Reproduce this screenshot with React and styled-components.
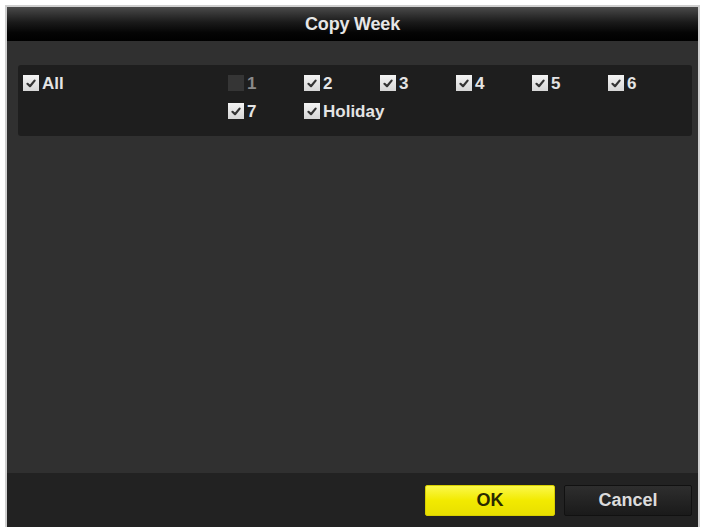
import React from "react";
import styled, { createGlobalStyle } from "styled-components";

const Global = createGlobalStyle`
  html, body { margin: 0; padding: 0; background: #ffffff; }
  body { font-family: "Liberation Sans", Arial, sans-serif; }
`;

const Page = styled.div`
  padding: 7px 0 0 7px;
`;

const Dialog = styled.div`
  width: 691px;
  height: 520px;
  display: flex;
  flex-direction: column;
  background: #303030;
  box-shadow: 0 0 0 2px #cfcfcf;
`;

const TitleBar = styled.div`
  height: 34px;
  flex: none;
  display: flex;
  align-items: center;
  justify-content: center;
  background: linear-gradient(#4a4a4a 0%, #1a1a1a 45%, #050505 75%, #000 100%);
  color: #e6e6e6;
  font-size: 18px;
  font-weight: bold;
  letter-spacing: -0.2px;
`;

const Body = styled.div`
  flex: 1;
  padding: 24px 6px 0 11px;
`;

const Panel = styled.div`
  height: 71px;
  box-sizing: border-box;
  padding: 10px 5px;
  background: #1e1e1e;
  border-radius: 3px;
  display: grid;
  grid-template-columns: 205px repeat(6, 76px);
  grid-auto-rows: 28px;
  align-content: start;
`;

const Item = styled.label`
  display: flex;
  align-items: flex-start;
  gap: 3px;
  grid-column: ${(p) => p.$col};
  grid-row: ${(p) => p.$row};
  color: ${(p) => (p.$on ? "#e4e4e4" : "#8a8a8a")};
  font-size: 17px;
  font-weight: bold;
  line-height: 17px;
`;

const Box = styled.span`
  width: 16px;
  height: 16px;
  flex: none;
  display: flex;
  align-items: center;
  justify-content: center;
  background: ${(p) =>
    p.$on ? "linear-gradient(#f4f4f4, #d6d6d6)" : "#353535"};
`;

const Footer = styled.div`
  height: 54px;
  flex: none;
  background: #222222;
  display: flex;
  align-items: center;
  justify-content: flex-end;
  gap: 9px;
  padding-right: 6px;
`;

const Button = styled.div`
  height: 31px;
  width: ${(p) => p.$w}px;
  display: flex;
  align-items: center;
  justify-content: center;
  font-size: 18px;
  font-weight: bold;
  box-sizing: border-box;
  color: ${(p) => (p.$primary ? "#2a2a00" : "#dcdcdc")};
  background: ${(p) =>
    p.$primary
      ? "linear-gradient(#fbf84a, #f2ea00 50%, #e8df00)"
      : "linear-gradient(#2e2e2e, #1a1a1a)"};
  border: 1px solid ${(p) => (p.$primary ? "#d8cf00" : "#111")};
  border-radius: 2px;
`;

const Check = () => (
  <svg width="10" height="9" viewBox="0 0 10 9">
    <path d="M1.5 4.8 L4 7.2 L8.6 1.6" fill="none" stroke="#333" strokeWidth="2.2" strokeLinecap="round" strokeLinejoin="round" />
  </svg>
);

const items = [
  { label: "All", col: 1, row: 1, on: true },
  { label: "1", col: 2, row: 1, on: false },
  { label: "2", col: 3, row: 1, on: true },
  { label: "3", col: 4, row: 1, on: true },
  { label: "4", col: 5, row: 1, on: true },
  { label: "5", col: 6, row: 1, on: true },
  { label: "6", col: 7, row: 1, on: true },
  { label: "7", col: 2, row: 2, on: true },
  { label: "Holiday", col: 3, row: 2, on: true },
];

export default function App() {
  return (
    <>
      <Global />
      <Page>
        <Dialog>
          <TitleBar>Copy Week</TitleBar>
          <Body>
            <Panel>
              {items.map((it) => (
                <Item key={it.label} $col={it.col} $row={it.row} $on={it.on}>
                  <Box $on={it.on}>{it.on && <Check />}</Box>
                  {it.label}
                </Item>
              ))}
            </Panel>
          </Body>
          <Footer>
            <Button $primary $w={130}>OK</Button>
            <Button $w={128}>Cancel</Button>
          </Footer>
        </Dialog>
      </Page>
    </>
  );
}
